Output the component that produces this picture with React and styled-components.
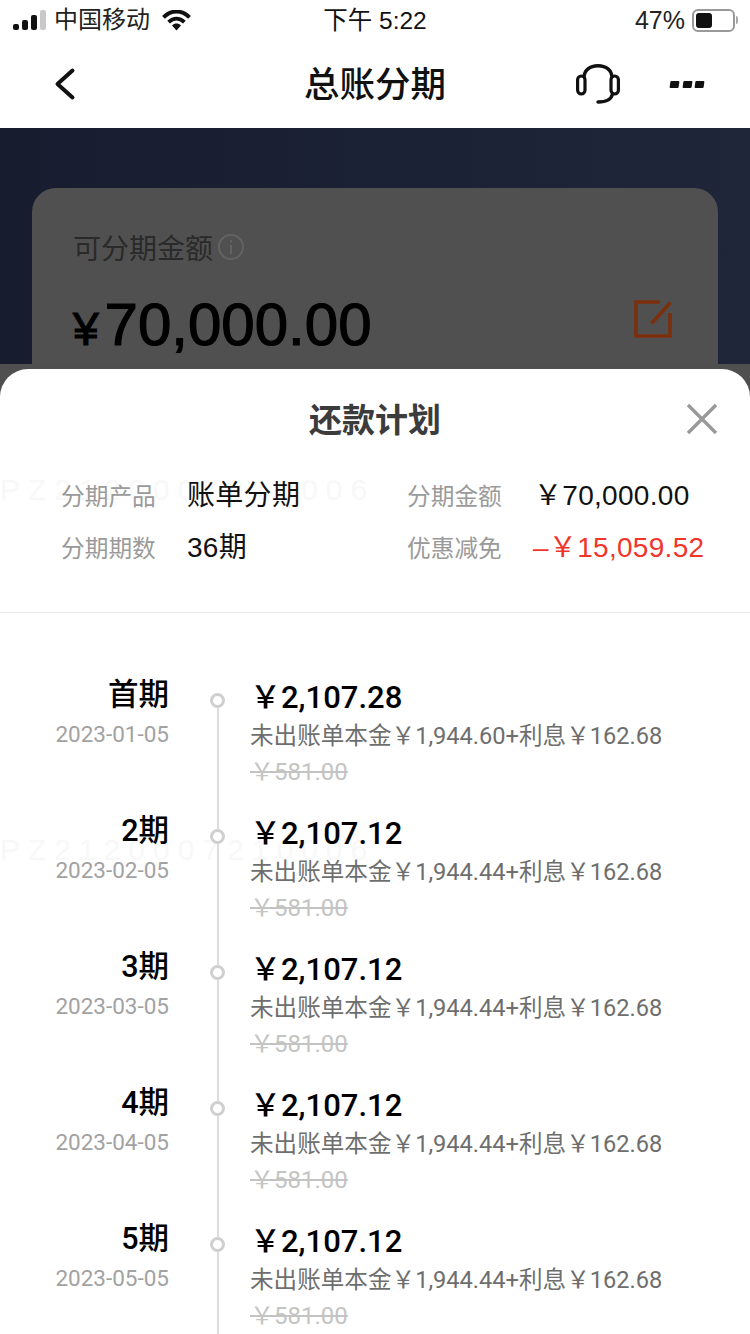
import React from "react";
import styled, { createGlobalStyle } from "styled-components";

const GlobalStyle = createGlobalStyle`
  html, body {
    margin: 0;
    padding: 0;
    background: #fff;
  }
  * {
    box-sizing: border-box;
  }
`;

const plans = [
  { name: "首期", date: "2023-01-05", amount: "2,107.28", principal: "1,944.60" },
  { name: "2期", date: "2023-02-05", amount: "2,107.12", principal: "1,944.44" },
  { name: "3期", date: "2023-03-05", amount: "2,107.12", principal: "1,944.44" },
  { name: "4期", date: "2023-04-05", amount: "2,107.12", principal: "1,944.44" },
  { name: "5期", date: "2023-05-05", amount: "2,107.12", principal: "1,944.44" },
];

const WATERMARK = "PZ2120007210006";

export default function App() {
  return (
    <Page>
      <GlobalStyle />
      <StatusBar>
        <StatusLeft>
          <Signal>
            <Bar $h={6} />
            <Bar $h={10} />
            <Bar $h={15} />
            <Bar $h={20} $off />
          </Signal>
          <Carrier>中国移动</Carrier>
          <svg width="29" height="21" viewBox="0 0 29 21">
            <path d="M1.5 7.4C9.4-.4 19.6-.4 27.5 7.4" fill="none" stroke="#111" strokeWidth="4" />
            <path d="M6.6 12.2c4.8-4.6 11-4.6 15.8 0" fill="none" stroke="#111" strokeWidth="3.8" />
            <path d="M10 15.4c2.8-2.4 6.2-2.4 9 0L14.5 20.6z" fill="#111" />
          </svg>
        </StatusLeft>
        <Clock>下午 5:22</Clock>
        <StatusRight>
          <span>47%</span>
          <Battery>
            <BatteryLevel />
          </Battery>
          <BatteryCap />
        </StatusRight>
      </StatusBar>

      <NavBar>
        <svg width="24" height="36" viewBox="0 0 24 36">
          <path d="M20.5 4.5 L5.5 18 L20.5 31.5" fill="none" stroke="#111" strokeWidth="4" strokeLinecap="round" strokeLinejoin="round" />
        </svg>
        <NavTitle>总账分期</NavTitle>
        <NavActions>
          <svg width="44" height="40" viewBox="0 0 44 40">
            <path d="M8 14C8 6 14 1.7 22 1.7S36 6 36 14" fill="none" stroke="#111" strokeWidth="3.4" />
            <rect x="1.6" y="12" width="7.4" height="18" rx="3.7" fill="none" stroke="#111" strokeWidth="3.2" />
            <rect x="35" y="12" width="7.4" height="18" rx="3.7" fill="none" stroke="#111" strokeWidth="3.2" />
            <path d="M36.5 30c-1 5-6 8-14.5 8" fill="none" stroke="#111" strokeWidth="3.4" strokeLinecap="round" />
          </svg>
          <Dots>
            <i />
            <i />
            <i />
          </Dots>
        </NavActions>
      </NavBar>

      <Hero>
        <QuotaCard>
          <QuotaLabel>
            可分期金额
            <svg width="28" height="28" viewBox="0 0 28 28">
              <circle cx="14" cy="14" r="12" fill="none" stroke="#666" strokeWidth="2" />
              <path d="M14 12v9M14 7v2.6" stroke="#666" strokeWidth="2" />
            </svg>
          </QuotaLabel>
          <QuotaRow>
            <QuotaValue>
              <small>¥</small>70,000.00
            </QuotaValue>
            <svg width="38" height="38" viewBox="0 0 38 38">
              <path d="M26 2H2v34h34V13" fill="none" stroke="#7c2f0c" strokeWidth="3.6" />
              <path d="M36.5 2.5 L17.5 23.5" fill="none" stroke="#7c2f0c" strokeWidth="3.6" />
            </svg>
          </QuotaRow>
        </QuotaCard>
      </Hero>

      <Backdrop />

      <Watermark $top={232} $dim>{WATERMARK}</Watermark>

      <Sheet>
        <Watermark $top={105}>{WATERMARK}</Watermark>
        <Watermark $top={465}>{WATERMARK}</Watermark>

        <SheetHeader>
          <SheetTitle>还款计划</SheetTitle>
          <CloseButton>
            <svg width="32" height="32" viewBox="0 0 32 32">
              <path d="M2 2 L30 30 M30 2 L2 30" stroke="#999" strokeWidth="3.4" />
            </svg>
          </CloseButton>
        </SheetHeader>

        <Summary>
          <SummaryLabel>分期产品</SummaryLabel>
          <SummaryValue>账单分期</SummaryValue>
          <SummaryLabel>分期金额</SummaryLabel>
          <SummaryValue $indent={1}>￥70,000.00</SummaryValue>
          <SummaryLabel>分期期数</SummaryLabel>
          <SummaryValue>36期</SummaryValue>
          <SummaryLabel>优惠减免</SummaryLabel>
          <SummaryValue $red>–￥15,059.52</SummaryValue>
        </Summary>

        <Timeline>
          {plans.map((plan) => (
            <PlanRow key={plan.date}>
              <PlanLeft>
                <PlanName>{plan.name}</PlanName>
                <PlanDate>{plan.date}</PlanDate>
              </PlanLeft>
              <Rail>
                <Dot />
              </Rail>
              <PlanRight>
                <PlanAmount>￥{plan.amount}</PlanAmount>
                <PlanDetail>未出账单本金￥{plan.principal}+利息￥162.68</PlanDetail>
                <PlanOld>￥581.00</PlanOld>
              </PlanRight>
            </PlanRow>
          ))}
        </Timeline>
      </Sheet>
    </Page>
  );
}

const cjk = `"Noto Sans CJK SC", sans-serif`;

const Page = styled.div`
  position: relative;
  width: 750px;
  height: 1334px;
  overflow: hidden;
  background: #fff;
  font-family: "Liberation Sans", ${cjk};
`;

const StatusBar = styled.div`
  height: 40px;
  padding: 0 12px 0 13px;
  display: flex;
  align-items: center;
  justify-content: space-between;
  position: relative;
  color: #111;
`;

const StatusLeft = styled.div`
  display: flex;
  align-items: center;
  gap: 8px;
`;

const Signal = styled.div`
  display: flex;
  align-items: flex-end;
  gap: 3px;
  height: 20px;
`;

const Bar = styled.i`
  width: 6px;
  height: ${(p) => p.$h}px;
  border-radius: 2px;
  background: ${(p) => (p.$off ? "#c9c9c9" : "#111")};
`;

const Carrier = styled.span`
  font-size: 24px;
  line-height: 30px;
  margin-bottom: 1px;
  margin-right: 4px;
  color: #222;
`;

const Clock = styled.div`
  position: absolute;
  top: 6px;
  left: 0;
  right: 0;
  text-align: center;
  font-size: 24.5px;
  line-height: 30px;
  pointer-events: none;
`;

const StatusRight = styled.div`
  display: flex;
  align-items: center;
  font-size: 25px;
  color: #222;
`;

const Battery = styled.div`
  width: 43px;
  height: 23px;
  margin-left: 7px;
  padding: 2px;
  border: 2px solid #999;
  border-radius: 6px;
`;

const BatteryLevel = styled.div`
  width: 47%;
  height: 100%;
  border-radius: 3px;
  background: #111;
`;

const BatteryCap = styled.div`
  width: 2px;
  height: 8px;
  margin-left: 1px;
  border-radius: 0 2px 2px 0;
  background: #aaa;
`;

const NavBar = styled.div`
  height: 88px;
  position: relative;
  padding: 0 46px 0 52px;
  display: flex;
  align-items: center;
  justify-content: space-between;
`;

const NavTitle = styled.div`
  position: absolute;
  top: 25px;
  left: 0;
  right: 0;
  text-align: center;
  font-size: 35.5px;
  line-height: 40px;
  font-weight: 500;
  color: #111;
`;

const NavActions = styled.div`
  display: flex;
  align-items: center;
  gap: 50px;
`;

const Dots = styled.div`
  display: flex;
  gap: 3.5px;

  i {
    width: 9px;
    height: 7px;
    background: #111;
    border-radius: 1px;
    transform: skewX(-8deg);
  }
`;

const Hero = styled.div`
  height: 236px;
  padding: 60px 32px 0;
  background: linear-gradient(90deg, #171d2f, #20263a);
  overflow: hidden;
`;

const QuotaCard = styled.div`
  height: 200px;
  padding: 40px 46px 0 41px;
  border-radius: 24px;
  background: #505050;
`;

const QuotaLabel = styled.div`
  display: flex;
  align-items: center;
  gap: 4px;
  height: 38px;
  font-size: 28px;
  color: #2a2a2a;

  svg {
    opacity: 0.9;
  }
`;

const QuotaRow = styled.div`
  margin-top: 24px;
  display: flex;
  align-items: flex-start;
  justify-content: space-between;

  svg {
    margin-top: 10px;
  }
`;

const QuotaValue = styled.div`
  font-size: 60px;
  line-height: 70px;
  -webkit-text-stroke: 1.2px #000;
  color: #000;

  small {
    font-size: 46px;
    margin-right: 6px;
  }
`;

const Backdrop = styled.div`
  height: 970px;
  background: #4f4f4f;
`;

const Sheet = styled.div`
  position: absolute;
  top: 369px;
  left: 0;
  right: 0;
  bottom: 0;
  border-radius: 28px 28px 0 0;
  background: #fff;
  overflow: hidden;
`;

const Watermark = styled.div`
  position: absolute;
  top: ${(p) => p.$top}px;
  left: 0;
  font-size: 30px;
  line-height: 32px;
  letter-spacing: 8px;
  white-space: nowrap;
  color: ${(p) => (p.$dim ? "rgba(255, 255, 255, 0.02)" : "#f8f8f8")};
`;

const SheetHeader = styled.div`
  height: 100px;
  position: relative;
  display: flex;
  align-items: center;
  justify-content: center;
`;

const SheetTitle = styled.div`
  font-size: 33px;
  line-height: 40px;
  margin-top: 4px;
  font-weight: 700;
  color: #3c3c3c;
`;

const CloseButton = styled.div`
  position: absolute;
  top: 34px;
  right: 32px;
  line-height: 0;
`;

const Summary = styled.div`
  position: relative;
  height: 144px;
  padding: 0 0 0 61px;
  display: grid;
  grid-template-columns: 126px 220px 126px 1fr;
  grid-auto-rows: 52px;
  align-items: center;
  align-content: start;
  border-bottom: 1px solid #e8e8e8;
`;

const SummaryLabel = styled.div`
  font-size: 23.7px;
  line-height: 32px;
  margin-top: 4px;
  color: #9a9a9a;
`;

const SummaryValue = styled.div`
  font-size: 28px;
  line-height: 34px;
  letter-spacing: 0.3px;
  margin-top: 1px;
  white-space: nowrap;
  margin-left: ${(p) => p.$indent || 0}px;
  color: ${(p) => (p.$red ? "#f1352b" : "#111")};
`;

const Timeline = styled.div`
  position: relative;
  padding-top: 60px;
`;

const PlanRow = styled.div`
  height: 136px;
  display: flex;
`;

const PlanLeft = styled.div`
  width: 169px;
  text-align: right;
`;

const PlanName = styled.div`
  height: 44px;
  line-height: 44px;
  font-family: Roboto, ${cjk};
  font-size: 30.5px;
  font-weight: 500;
  color: #000;
`;

const PlanDate = styled.div`
  margin-top: 4px;
  font-family: Roboto, sans-serif;
  font-size: 22.5px;
  color: #a2a2a2;
`;

const Rail = styled.div`
  width: 81px;
  position: relative;
  padding-left: 48px;

  &::before {
    content: "";
    display: block;
    width: 2px;
    height: 100%;
    background: #dcdcdc;
  }

  ${PlanRow}:first-child &::before {
    height: calc(100% - 27px);
    margin-top: 27px;
  }
`;

const Dot = styled.div`
  position: absolute;
  top: 20px;
  left: 41px;
  width: 15px;
  height: 15px;
  border: 3px solid #cfcfcf;
  border-radius: 50%;
  background: #fff;
`;

const PlanRight = styled.div`
  flex: 1;
  font-family: Roboto, ${cjk};
  white-space: nowrap;
`;

const PlanAmount = styled.div`
  height: 45px;
  margin-top: 2px;
  line-height: 46px;
  font-size: 31px;
  font-weight: 500;
  color: #000;
`;

const PlanDetail = styled.div`
  font-size: 23.6px;
  line-height: 32px;
  color: #6e6e6e;
`;

const PlanOld = styled.div`
  margin-top: 4px;
  font-size: 24px;
  line-height: 32px;
  color: #c4c4c4;
  text-decoration: line-through;
`;
